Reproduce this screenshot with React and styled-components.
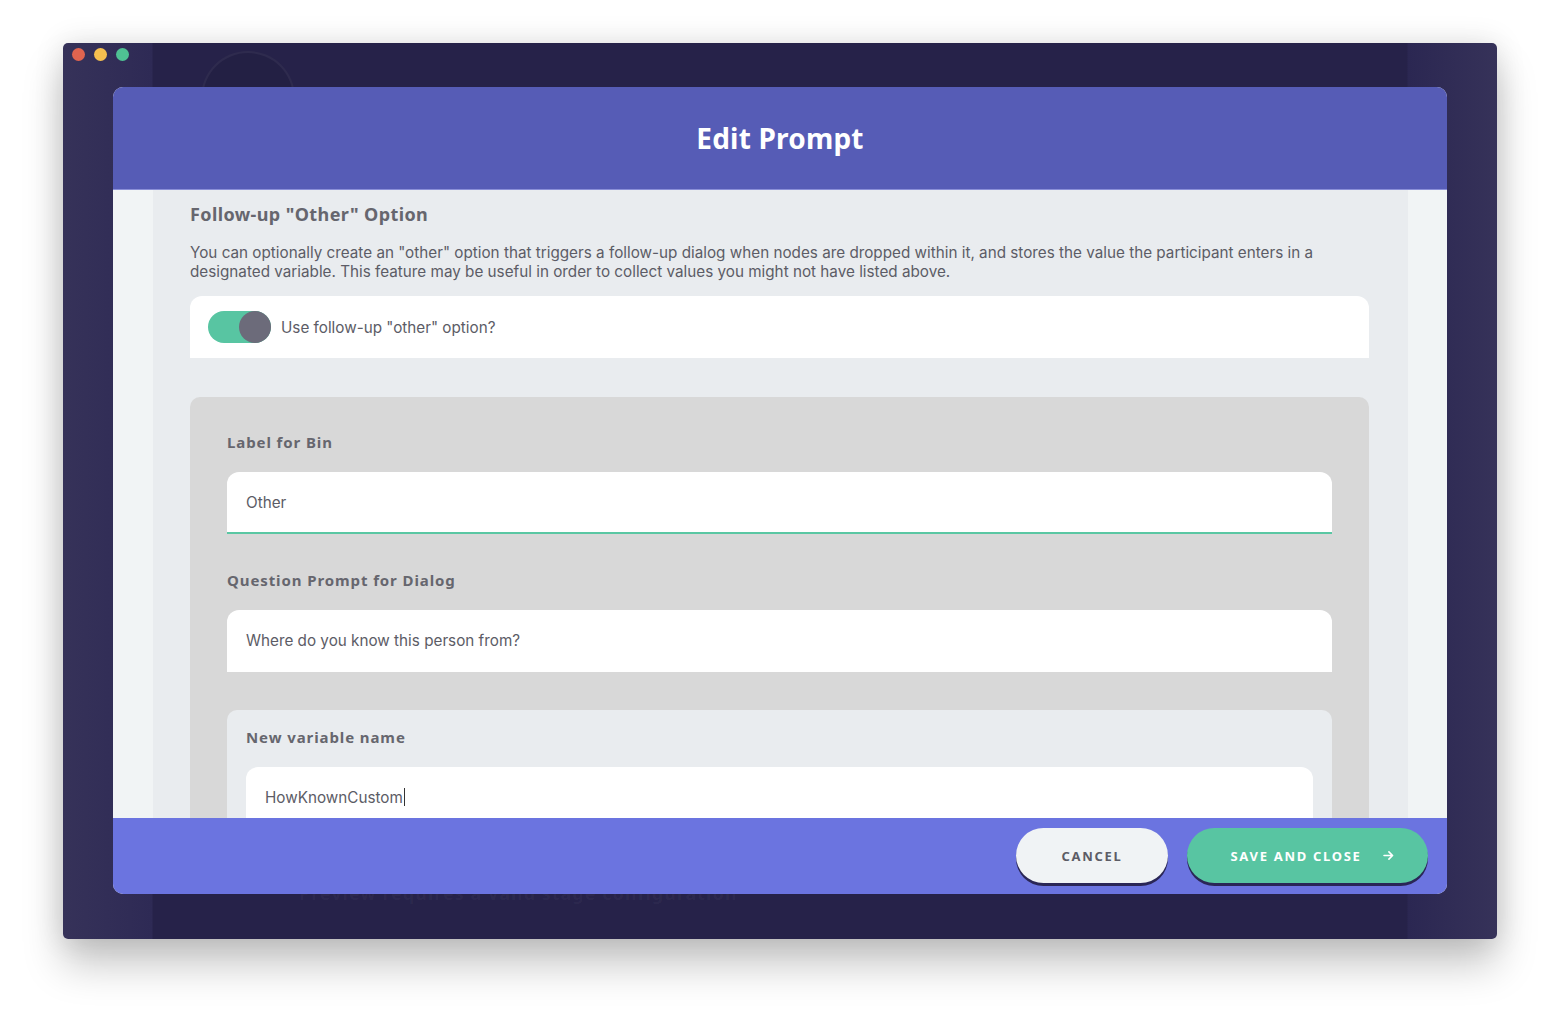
import React from "react";
import styled, { createGlobalStyle } from "styled-components";

const GlobalStyle = createGlobalStyle`
  html, body {
    margin: 0;
    padding: 0;
    background: #ffffff;
    width: 1560px;
    height: 1022px;
    overflow: hidden;
  }
  * { box-sizing: border-box; }
`;

const App = () => {
  return (
    <Page>
      <GlobalStyle />
      <Window>
        <TrafficLights>
          <Light color="#e0644f" />
          <Light color="#f5bf4f" />
          <Light color="#4fc193" />
        </TrafficLights>
        <BackdropRing />
        <Modal>
          <ModalHeader>
            <Title>Edit Prompt</Title>
          </ModalHeader>
          <ModalBody>
            <Column>
              <SectionTitle>Follow-up "Other" Option</SectionTitle>
              <Description>
                You can optionally create an "other" option that triggers a
                follow-up dialog when nodes are dropped within it, and stores
                the value the participant enters in a designated variable. This
                feature may be useful in order to collect values you might not
                have listed above.
              </Description>
              <ToggleCard>
                <Toggle>
                  <Knob />
                </Toggle>
                <ToggleLabel>Use follow-up "other" option?</ToggleLabel>
              </ToggleCard>
              <GreyBox>
                <FieldLabel>Label for Bin</FieldLabel>
                <Input active>Other</Input>
                <FieldLabel>Question Prompt for Dialog</FieldLabel>
                <Input>Where do you know this person from?</Input>
                <SubBox>
                  <FieldLabel>New variable name</FieldLabel>
                  <Input>
                    HowKnownCustom
                    <Caret />
                  </Input>
                </SubBox>
              </GreyBox>
            </Column>
          </ModalBody>
          <ModalFooter>
            <Button>Cancel</Button>
            <Button primary>
              Save and close
              <Arrow viewBox="0 0 16 16">
                <path
                  d="M2.5 8h10M8.5 3.5 13 8l-4.5 4.5"
                  fill="none"
                  stroke="currentColor"
                  strokeWidth="2"
                  strokeLinecap="round"
                  strokeLinejoin="round"
                />
              </Arrow>
            </Button>
          </ModalFooter>
        </Modal>
        <BehindText>Preview requires a valid stage configuration</BehindText>
      </Window>
    </Page>
  );
};

const Page = styled.div`
  width: 1560px;
  height: 1022px;
  padding: 43px 63px 83px 63px;
  background: #ffffff;
`;

const Window = styled.div`
  position: relative;
  height: 896px;
  border-radius: 5px;
  padding: 44px 50px 45px 50px;
  background:
    linear-gradient(90deg, #363259 0, #2e2a55 89px, #262249 90px, #262249 1344px, #2b2752 1345px, #363259 100%);
  box-shadow: 0 26px 40px rgba(0, 0, 0, 0.22), 0 0 30px rgba(0, 0, 0, 0.12);
  display: flex;
  overflow: hidden;
`;

const TrafficLights = styled.div`
  position: absolute;
  top: 5px;
  left: 9px;
  display: flex;
  gap: 9px;
`;

const Light = styled.span`
  width: 13px;
  height: 13px;
  border-radius: 50%;
  background: ${(p) => p.color};
`;

const BackdropRing = styled.div`
  position: absolute;
  top: 8px;
  left: 138px;
  width: 94px;
  height: 94px;
  border-radius: 50%;
  border: 2px solid rgba(255, 255, 255, 0.05);
  background: rgba(0, 0, 0, 0.06);
`;

const BehindText = styled.div`
  position: absolute;
  left: 236px;
  bottom: 34px;
  font-family: "Noto Sans", sans-serif;
  font-size: 18px;
  font-weight: 700;
  color: rgba(255, 255, 255, 0.04);
  letter-spacing: 1px;
`;

const Modal = styled.div`
  position: relative;
  z-index: 1;
  flex: 1;
  display: flex;
  flex-direction: column;
  border-radius: 10px;
  overflow: hidden;
  background: #f1f4f5;
`;

const ModalHeader = styled.div`
  height: 103px;
  flex-shrink: 0;
  background: #565cb6;
  display: flex;
  align-items: center;
  justify-content: center;
  border-bottom: 1px solid #8a8fd8;
`;

const Title = styled.h1`
  margin: 0;
  font-family: "Noto Sans", sans-serif;
  font-size: 28px;
  font-weight: 700;
  letter-spacing: 0.2px;
  color: #ffffff;
`;

const ModalBody = styled.div`
  flex: 1;
  overflow: hidden;
  padding: 0 39px 0 40px;
  background: #f1f4f5;
`;

const Column = styled.div`
  height: 100%;
  background: #e9ecef;
  padding: 12px 39px 0 37px;
`;

const SectionTitle = styled.h2`
  margin: 0;
  font-family: "Noto Sans", sans-serif;
  font-size: 18px;
  font-weight: 700;
  letter-spacing: 0.4px;
  color: #66666e;
  line-height: 24px;
`;

const Description = styled.p`
  margin: 17px 0 15px;
  font-family: Inter, "Noto Sans", sans-serif;
  font-size: 15.25px;
  line-height: 19px;
  color: #5c5c66;
`;

const ToggleCard = styled.div`
  height: 62px;
  border-radius: 12px 12px 0 0;
  background: #ffffff;
  display: flex;
  align-items: center;
  padding: 0 18px;
  gap: 10px;
`;

const Toggle = styled.div`
  width: 63px;
  height: 32px;
  border-radius: 16px;
  background: #58c5a2;
  display: flex;
  justify-content: flex-end;
`;

const Knob = styled.div`
  width: 32px;
  height: 32px;
  border-radius: 50%;
  background: #6c6b7a;
`;

const ToggleLabel = styled.span`
  font-family: Inter, "Noto Sans", sans-serif;
  font-size: 15.25px;
  color: #5c5c66;
`;

const GreyBox = styled.div`
  margin-top: 39px;
  border-radius: 10px 10px 0 0;
  background: #d8d8d8;
  padding: 34px 37px 0 37px;
  min-height: 460px;
`;

const FieldLabel = styled.div`
  font-family: "Noto Sans", sans-serif;
  font-size: 15px;
  font-weight: 700;
  letter-spacing: 0.9px;
  color: #66666e;
  line-height: 22px;
  margin-bottom: 19px;
`;

const Input = styled.div`
  height: 62px;
  border-radius: 12px 12px 0 0;
  background: #ffffff;
  display: flex;
  align-items: center;
  padding: 0 19px;
  font-family: Inter, "Noto Sans", sans-serif;
  font-size: 15.25px;
  color: #5c5c66;
  border-bottom: 2px solid ${(p) => (p.active ? "#5ac7a3" : "transparent")};
  margin-bottom: ${(p) => (p.active ? "35px" : "38px")};
`;

const Caret = styled.span`
  display: inline-block;
  width: 1px;
  height: 18px;
  background: #333;
  margin-left: 1px;
`;

const SubBox = styled.div`
  border-radius: 10px;
  background: #e9ecef;
  padding: 16px 19px 0 19px;
`;

const ModalFooter = styled.div`
  height: 76px;
  flex-shrink: 0;
  background: #6b74e0;
  display: flex;
  align-items: flex-start;
  justify-content: flex-end;
  padding: 10px 19px 0 0;
  gap: 19px;
`;

const Button = styled.div`
  height: 55px;
  width: ${(p) => (p.primary ? "241px" : "152px")};
  padding-left: ${(p) => (p.primary ? "10px" : "0")};
  border-radius: 28px;
  display: flex;
  align-items: center;
  justify-content: center;
  gap: 20px;
  white-space: nowrap;
  font-family: "Noto Sans", sans-serif;
  font-size: 13px;
  font-weight: 700;
  letter-spacing: 1.7px;
  text-transform: uppercase;
  background: ${(p) => (p.primary ? "#58c5a2" : "#f0f3f5")};
  color: ${(p) => (p.primary ? "#ffffff" : "#5c5c66")};
  box-shadow: 0 3px 0 #2a2656;
`;

const Arrow = styled.svg`
  width: 13px;
  height: 13px;
`;

export default App;
